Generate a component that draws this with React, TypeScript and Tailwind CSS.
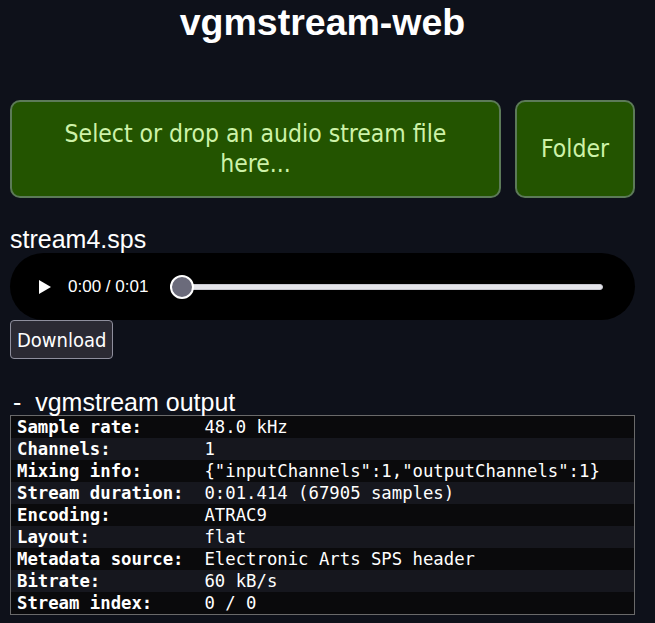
import React from "react";

const INFO: [string, string][] = [
  ["Sample rate:", "48.0 kHz"],
  ["Channels:", "1"],
  ["Mixing info:", '{"inputChannels":1,"outputChannels":1}'],
  ["Stream duration:", "0:01.414 (67905 samples)"],
  ["Encoding:", "ATRAC9"],
  ["Layout:", "flat"],
  ["Metadata source:", "Electronic Arts SPS header"],
  ["Bitrate:", "60 kB/s"],
  ["Stream index:", "0 / 0"],
];

const AudioBar: React.FC = () => (
  <div className="flex items-center h-[67px] rounded-full bg-black pl-[28px] pr-[32px]">
    <svg width="14" height="16" viewBox="0 0 14 16" className="mr-[16px]">
      <path d="M1 1 L13 8 L1 15 Z" fill="#fff" />
    </svg>
    <span className="text-[17px] text-white font-['Liberation_Sans',Arial,sans-serif] whitespace-nowrap">
      0:00 / 0:01
    </span>
    <div className="relative flex-1 ml-[22px] h-[24px] flex items-center">
      <div className="w-full h-[6px] rounded-full bg-[#e4e4ea] border border-[#c8c8d0]" />
      <div className="absolute left-0 top-0 w-[24px] h-[24px] rounded-full bg-[#6b6b7b] border-2 border-white" />
    </div>
  </div>
);

export default function App() {
  return (
    <div className="min-h-[623px] bg-[#0e111a] text-white font-['Liberation_Sans',Arial,sans-serif] pl-[10px] pr-[20px] pb-[8px]">
      <h1 className="text-center text-[37.5px] leading-[44px] font-bold">vgmstream-web</h1>

      <div className="flex gap-[14px] mt-[56px] font-['DejaVu_Sans_Condensed','Liberation_Sans_Narrow','DejaVu_Sans',sans-serif] text-[#cdf2a8]">
        <button className="flex-1 h-[98px] rounded-[10px] bg-[#235400] border-2 border-[#5c7a58] text-[24.5px] leading-[30px] px-[40px]">
          Select or drop an audio stream file here...
        </button>
        <button className="w-[120px] h-[98px] rounded-[10px] bg-[#235400] border-2 border-[#5c7a58] text-[24.5px]">
          Folder
        </button>
      </div>

      <div className="mt-[28px] text-[25px] leading-[27px]">stream4.sps</div>
      <AudioBar />
      <button className="mt-0 h-[39px] px-[6px] rounded-[4px] bg-[#2b2a33] border border-[#8f8f9d] text-[20px] leading-[24px] text-white font-['DejaVu_Sans_Condensed','Liberation_Sans_Narrow','DejaVu_Sans',sans-serif]">
        Download
      </button>

      <div className="mt-[30px] text-[25px] leading-[26px] pl-[3px]">
        -&nbsp; vgmstream output
      </div>
      <div className="border border-[#6a6a6a] font-['DejaVu_Sans_Mono',monospace] text-[17.3px] leading-[22px] grid grid-cols-[auto_1fr]">
        {INFO.map(([k, v], i) => (
          <React.Fragment key={k}>
            <div className={`pl-[6px] pr-[21px] font-bold whitespace-pre ${i % 2 === 0 ? "bg-[#0a0a0c]" : "bg-[#16171e]"}`}>
              {k}
            </div>
            <div className={`whitespace-pre ${i % 2 === 0 ? "bg-[#0a0a0c]" : "bg-[#16171e]"}`}>{v}</div>
          </React.Fragment>
        ))}
      </div>
    </div>
  );
}
